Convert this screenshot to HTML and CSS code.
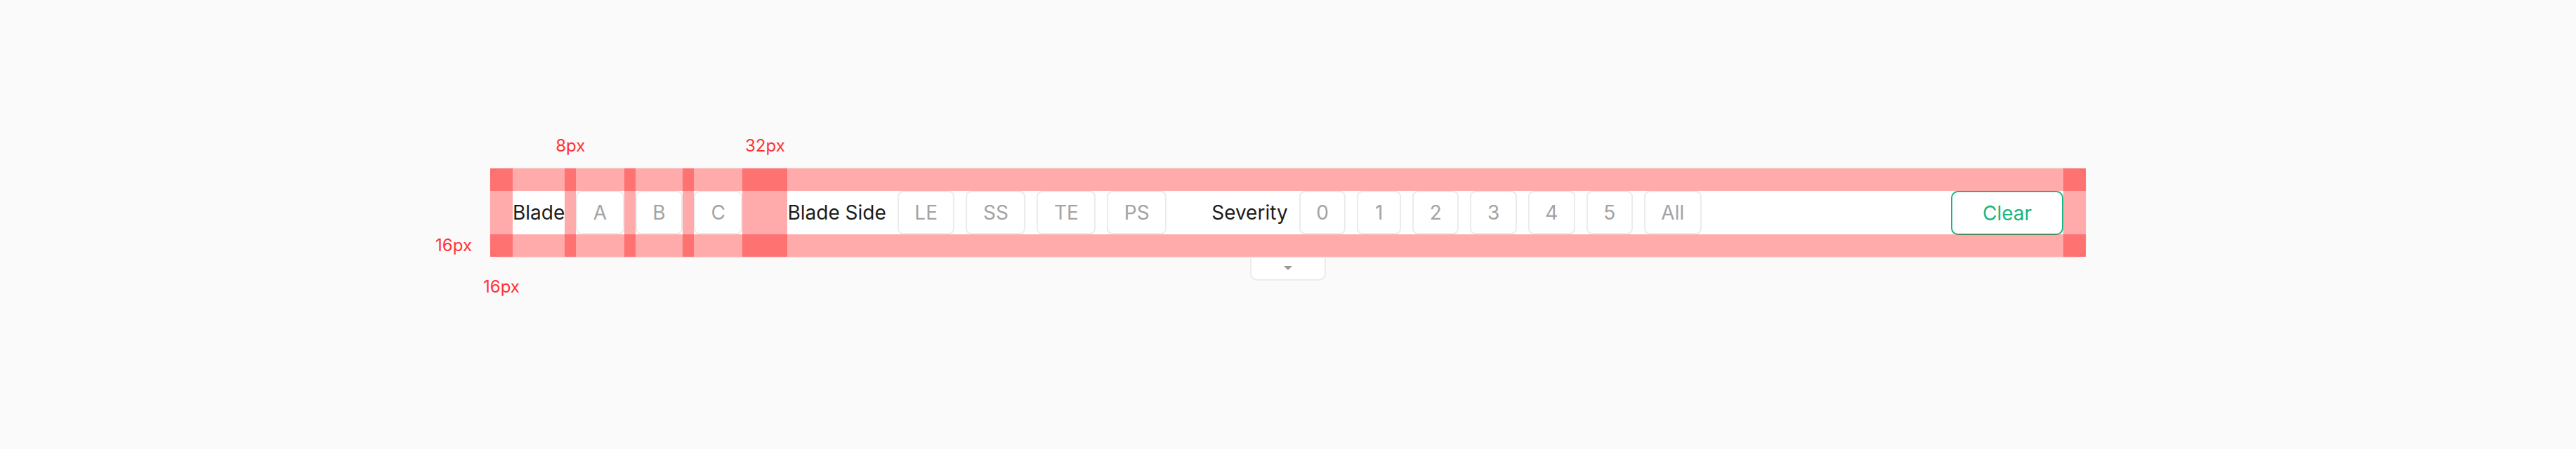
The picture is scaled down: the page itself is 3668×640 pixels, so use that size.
FILE: index.html
```html
<!DOCTYPE html>
<html lang="en">
<head>
<meta charset="utf-8">
<title>Filter bar spacing spec</title>
<link rel="stylesheet" href="styles.css">
</head>
<body>
<div class="stage">
  <div class="bar">
    <div class="filter-group">
      <span class="group-label">Blade</span>
      <i class="guide guide-sm"><span class="guide-note">8px</span></i>
      <button class="chip">A</button>
      <i class="guide guide-sm"></i>
      <button class="chip">B</button>
      <i class="guide guide-sm"></i>
      <button class="chip">C</button>
    </div>
    <i class="guide guide-lg"><span class="guide-note">32px</span></i>
    <div class="filter-group spaced">
      <span class="group-label">Blade Side</span>
      <button class="chip">LE</button>
      <button class="chip">SS</button>
      <button class="chip">TE</button>
      <button class="chip">PS</button>
    </div>
    <div class="filter-group spaced group-gap">
      <span class="group-label">Severity</span>
      <button class="chip">0</button>
      <button class="chip">1</button>
      <button class="chip">2</button>
      <button class="chip">3</button>
      <button class="chip">4</button>
      <button class="chip">5</button>
      <button class="chip">All</button>
    </div>
    <button class="clear-btn">Clear</button>

    <div class="pad pad-top"></div>
    <div class="pad pad-bottom"><span class="side-note">16px</span></div>
    <div class="pad pad-left"><span class="below-note">16px</span></div>
    <div class="pad pad-right"></div>
  </div>
  <div class="toggle-tab"><span class="caret"></span></div>
</div>
</body>
</html>
```

FILE: styles.css
```css
html, body {
  margin: 0;
  padding: 0;
}

body {
  background: #fafafa;
  min-height: 640px;
  font-family: Inter, "Noto Sans", "Liberation Sans", sans-serif;
}

.stage {
  padding-top: 240px;
  display: flex;
  flex-direction: column;
  align-items: center;
}

.bar {
  position: relative;
  box-sizing: border-box;
  width: 2272px;
  height: 126px;
  padding: 32px;
  display: flex;
  align-items: center;
  background: #ffffff;
  border-radius: 16px;
  box-shadow: 0 0 0 1px #efefef, 0 2px 0 0 #ebebeb;
}

.filter-group {
  display: flex;
  align-items: center;
  align-self: stretch;
}

.filter-group.spaced {
  gap: 16px;
}

.filter-group.group-gap {
  margin-left: 64px;
}

.group-label {
  font-size: 28px;
  color: #1c1c1c;
  white-space: nowrap;
  line-height: 62px;
}

.chip {
  box-sizing: border-box;
  height: 62px;
  min-width: 63px;
  padding: 0 22.5px;
  border: 2px solid #ebebeb;
  border-radius: 8px;
  background: #ffffff;
  font-family: inherit;
  font-size: 28px;
  color: #a3a3a3;
  display: flex;
  align-items: center;
  justify-content: center;
  cursor: pointer;
}

.clear-btn {
  margin-left: auto;
  box-sizing: border-box;
  min-width: 160px;
  height: 63px;
  align-self: flex-start;
  border: 2px solid #16b67e;
  border-radius: 10px;
  background: #ffffff;
  font-family: inherit;
  font-size: 28px;
  color: #16b67e;
  cursor: pointer;
}

/* spacing guides */
.guide {
  position: relative;
  align-self: stretch;
  flex: none;
  display: block;
}

.guide::before {
  content: "";
  position: absolute;
  left: 0;
  right: 0;
  top: -32px;
  bottom: -32px;
  background: rgba(255, 0, 0, 0.33);
}

.guide-sm {
  width: 16px;
}

.guide-lg {
  width: 64px;
}

.guide-note,
.side-note,
.below-note {
  position: absolute;
  font-size: 24px;
  line-height: 24px;
  color: #ff3333;
  white-space: nowrap;
  font-style: normal;
}

.guide-note {
  left: 50%;
  bottom: calc(100% + 52px);
  transform: translateX(-50%);
}

.pad {
  position: absolute;
  background: rgba(255, 0, 0, 0.33);
  pointer-events: none;
}

.pad-top {
  left: 0;
  right: 0;
  top: 0;
  height: 32px;
}

.pad-bottom {
  left: 0;
  right: 0;
  bottom: 0;
  height: 32px;
}

.pad-left {
  left: 0;
  top: 0;
  bottom: 0;
  width: 32px;
}

.pad-right {
  right: 0;
  top: 0;
  bottom: 0;
  width: 32px;
}

.side-note {
  right: calc(100% + 26px);
  top: 4px;
}

.below-note {
  left: 50%;
  top: calc(100% + 31px);
  transform: translateX(-50%);
}

.toggle-tab {
  box-sizing: border-box;
  width: 108px;
  height: 34px;
  background: #ffffff;
  border: 2px solid #ebebeb;
  border-top: none;
  border-radius: 0 0 10px 10px;
  display: flex;
  align-items: center;
  justify-content: center;
}

.caret {
  width: 0;
  height: 0;
  border-left: 6px solid transparent;
  border-right: 6px solid transparent;
  border-top: 6px solid #999999;
}
```
